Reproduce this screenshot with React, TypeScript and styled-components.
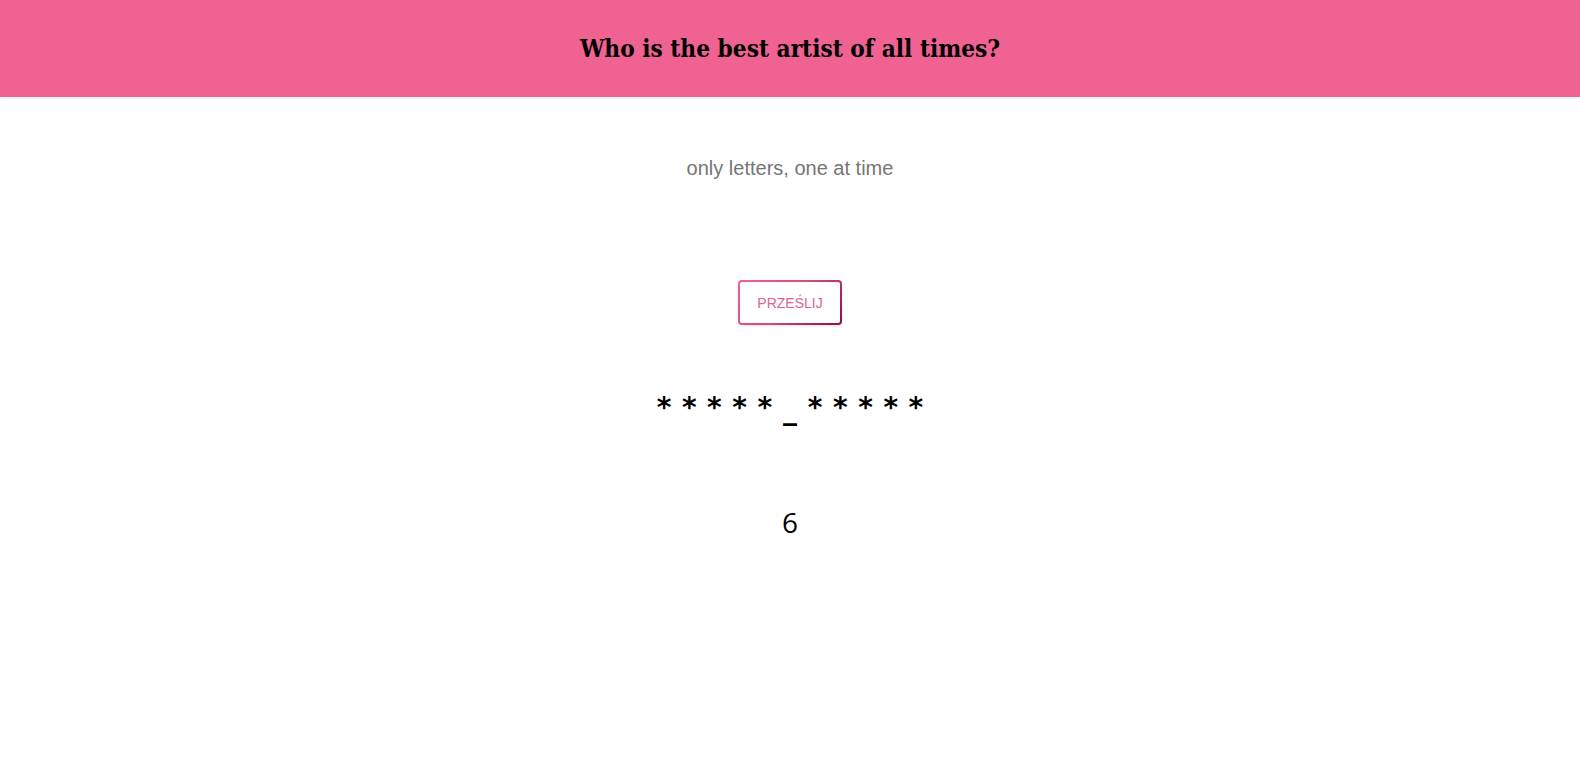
import React from "react";
import styled, { createGlobalStyle } from "styled-components";

const Global = createGlobalStyle`
  html, body { margin: 0; padding: 0; background: #fff; }
  body { font-family: "Liberation Sans", Arial, sans-serif; }
`;

const Header = styled.header`
  height: 97px;
  background: #f06292;
  display: flex;
  align-items: center;
  justify-content: center;
  box-shadow: 0 1px 2px rgba(0,0,0,0.08);
`;

const Title = styled.h1`
  margin: 0;
  font-family: "DejaVu Serif", "Liberation Serif", serif;
  font-stretch: condensed;
  font-weight: 700;
  font-size: 24.2px;
  color: #000;
`;

const Main = styled.main`
  display: flex;
  flex-direction: column;
  align-items: center;
`;

const Hint = styled.p`
  margin: 59px 0 0;
  font-family: "Liberation Sans", Arial, sans-serif;
  font-size: 20px;
  line-height: 24px;
  color: #757575;
`;

const SubmitButton = styled.button`
  margin-top: 100px;
  width: 104px;
  height: 45px;
  border: 2px solid transparent;
  border-radius: 4px;
  background:
    linear-gradient(#fff, #fff) padding-box,
    linear-gradient(135deg, #f06292 0%, #d04c80 50%, #880e4f 100%) border-box;
  color: #e0628f;
  font-family: "Liberation Sans", Arial, sans-serif;
  font-size: 14px;
  cursor: pointer;
  box-shadow: 0 1px 3px rgba(0,0,0,0.12);
`;

const Word = styled.div`
  margin-top: 56px;
  display: flex;
  font-family: "DejaVu Sans", Verdana, sans-serif;
  font-weight: 700;
  font-size: 28px;
  line-height: 44px;
  color: #000;
`;

const Char = styled.span<{ $low?: boolean }>`
  width: 25.2px;
  text-align: center;
  transform: translateY(${(p) => (p.$low ? "7px" : "5px")});
`;

const Count = styled.div`
  margin-top: 79px;
  font-family: "Open Sans", sans-serif;
  font-size: 28px;
  line-height: 36px;
  color: #000;
`;

export default function App() {
  const masked = "*****_*****".split("");
  return (
    <>
      <Global />
      <Header>
        <Title>Who is the best artist of all times?</Title>
      </Header>
      <Main>
        <Hint>only letters, one at time</Hint>
        <SubmitButton>PRZEŚLIJ</SubmitButton>
        <Word>
          {masked.map((c, i) => (
            <Char key={i} $low={c === "_"}>{c}</Char>
          ))}
        </Word>
        <Count>6</Count>
      </Main>
    </>
  );
}
